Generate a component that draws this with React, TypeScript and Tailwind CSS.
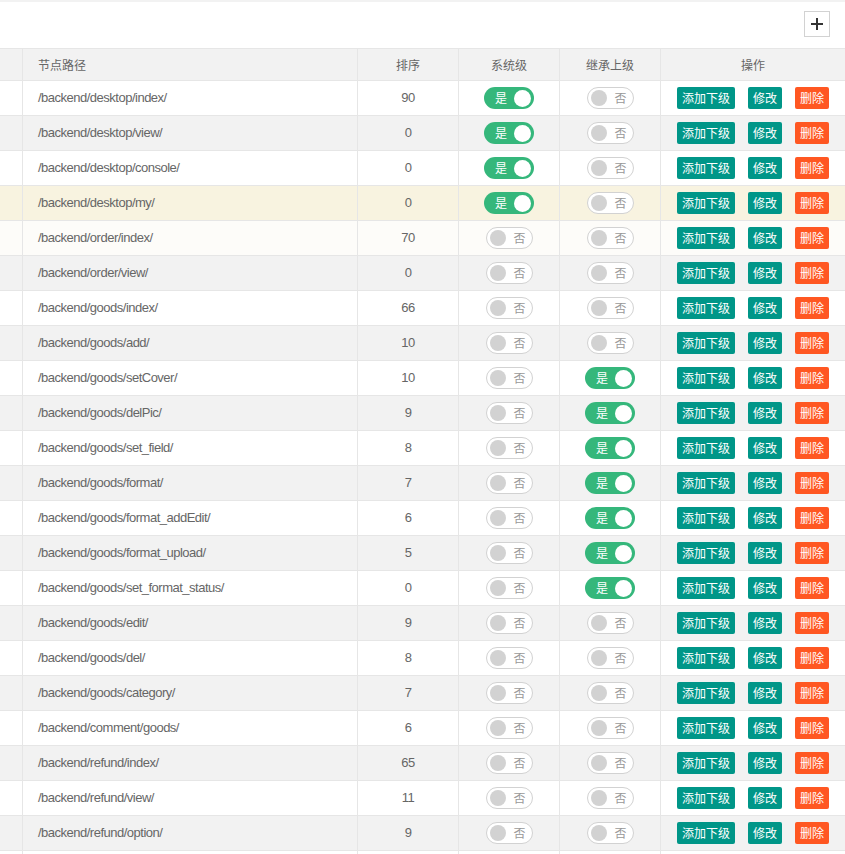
import React from "react";

type Row = { path: string; sort: number; sys: boolean; inherit: boolean };

const rows: Row[] = [
  { path: "/backend/desktop/index/", sort: 90, sys: true, inherit: false },
  { path: "/backend/desktop/view/", sort: 0, sys: true, inherit: false },
  { path: "/backend/desktop/console/", sort: 0, sys: true, inherit: false },
  { path: "/backend/desktop/my/", sort: 0, sys: true, inherit: false },
  { path: "/backend/order/index/", sort: 70, sys: false, inherit: false },
  { path: "/backend/order/view/", sort: 0, sys: false, inherit: false },
  { path: "/backend/goods/index/", sort: 66, sys: false, inherit: false },
  { path: "/backend/goods/add/", sort: 10, sys: false, inherit: false },
  { path: "/backend/goods/setCover/", sort: 10, sys: false, inherit: true },
  { path: "/backend/goods/delPic/", sort: 9, sys: false, inherit: true },
  { path: "/backend/goods/set_field/", sort: 8, sys: false, inherit: true },
  { path: "/backend/goods/format/", sort: 7, sys: false, inherit: true },
  { path: "/backend/goods/format_addEdit/", sort: 6, sys: false, inherit: true },
  { path: "/backend/goods/format_upload/", sort: 5, sys: false, inherit: true },
  { path: "/backend/goods/set_format_status/", sort: 0, sys: false, inherit: true },
  { path: "/backend/goods/edit/", sort: 9, sys: false, inherit: false },
  { path: "/backend/goods/del/", sort: 8, sys: false, inherit: false },
  { path: "/backend/goods/category/", sort: 7, sys: false, inherit: false },
  { path: "/backend/comment/goods/", sort: 6, sys: false, inherit: false },
  { path: "/backend/refund/index/", sort: 65, sys: false, inherit: false },
  { path: "/backend/refund/view/", sort: 11, sys: false, inherit: false },
  { path: "/backend/refund/option/", sort: 9, sys: false, inherit: false },
];

const latin = { fontFamily: "'Liberation Sans', 'Noto Sans CJK SC', sans-serif" };
const cjk = { fontFamily: "'Noto Sans CJK SC', 'Liberation Sans', sans-serif" };

function Switch({ on }: { on: boolean }) {
  if (on) {
    return (
      <div className="flex h-[22px] w-[50px] items-center justify-between rounded-full bg-[#35b77b] pl-[11px] pr-[3px]">
        <span className="text-[12px] leading-none text-white" style={cjk}>是</span>
        <span className="h-[17px] w-[17px] rounded-full bg-white" />
      </div>
    );
  }
  return (
    <div className="flex h-[22px] w-[47px] items-center justify-between rounded-full border border-[#d2d2d2] bg-white pl-[3px] pr-[6px]">
      <span className="h-[16px] w-[16px] rounded-full bg-[#d2d2d2]" />
      <span className="text-[12px] leading-none text-[#999]" style={cjk}>否</span>
    </div>
  );
}

function Btn({ label, color }: { label: string; color: string }) {
  return (
    <span
      className={`flex h-[22px] items-center rounded-[2px] px-[5px] text-[12px] leading-none text-white ${color}`}
      style={cjk}
    >
      {label}
    </span>
  );
}

const gridCols = "grid grid-cols-[23px_335px_101px_101px_101px_1fr]";

export default function App() {
  return (
    <div className="w-[845px] h-[854px] overflow-hidden bg-white text-[#666]">
      <div className="h-[2px] bg-[#f2f2f2]" />
      <div className="flex h-[46px] items-start justify-end pr-[15px] pt-[9px]">
        <button className="flex h-[26px] w-[26px] items-center justify-center border border-[#d2d2d2] bg-white">
          <svg width="12" height="12" viewBox="0 0 12 12">
            <path d="M6 0V12M0 6H12" stroke="#333" strokeWidth="2" />
          </svg>
        </button>
      </div>
      <div className="border-t border-[#e6e6e6]">
        <div className={`${gridCols} h-[32px] border-b border-[#e6e6e6] bg-[#f2f2f2] text-[12px]`} style={cjk}>
          <div className="border-r border-[#e6e6e6]" />
          <div className="flex items-center border-r border-[#e6e6e6] pl-[15px]">节点路径</div>
          <div className="flex items-center justify-center border-r border-[#e6e6e6]">排序</div>
          <div className="flex items-center justify-center border-r border-[#e6e6e6]">系统级</div>
          <div className="flex items-center justify-center border-r border-[#e6e6e6]">继承上级</div>
          <div className="flex items-center justify-center">操作</div>
        </div>
        {rows.map((r, i) => {
          let bg = i % 2 === 1 ? "bg-[#f2f2f2]" : "bg-white";
          if (i === 3) bg = "bg-[#f8f3e0]";
          if (i === 4) bg = "bg-[#fdfcf9]";
          return (
            <div key={i} className={`${gridCols} h-[35px] border-b border-[#e6e6e6] ${bg}`}>
              <div className="border-r border-[#e6e6e6]" />
              <div className="flex items-center border-r border-[#e6e6e6] pl-[15px] text-[13px] tracking-[-0.5px]" style={latin}>
                {r.path}
              </div>
              <div className="flex items-center justify-center border-r border-[#e6e6e6] text-[13px] tracking-[-0.5px]" style={latin}>
                {r.sort}
              </div>
              <div className="flex items-center justify-center border-r border-[#e6e6e6]">
                <Switch on={r.sys} />
              </div>
              <div className="flex items-center justify-center border-r border-[#e6e6e6]">
                <Switch on={r.inherit} />
              </div>
              <div className="flex items-center justify-center gap-[13px]">
                <Btn label="添加下级" color="bg-[#009688]" />
                <Btn label="修改" color="bg-[#009688]" />
                <Btn label="删除" color="bg-[#ff5722]" />
              </div>
            </div>
          );
        })}
        <div className={`${gridCols} h-[35px] bg-white`}>
          <div className="border-r border-[#e6e6e6]" />
          <div className="border-r border-[#e6e6e6]" />
          <div className="border-r border-[#e6e6e6]" />
          <div className="border-r border-[#e6e6e6]" />
          <div className="border-r border-[#e6e6e6]" />
          <div />
        </div>
      </div>
    </div>
  );
}
